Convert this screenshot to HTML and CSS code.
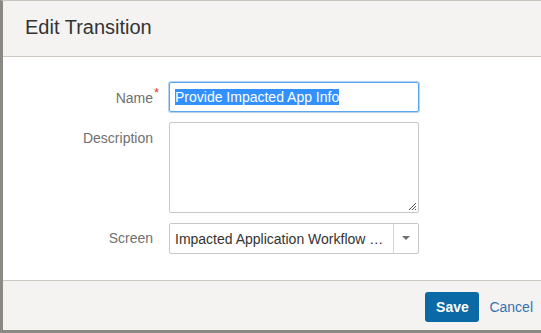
FILE: index.html
```html
<!DOCTYPE html>
<html lang="en">
<head>
    <meta charset="UTF-8">
    <meta name="viewport" content="width=device-width, initial-scale=1.0">
    <title>Edit Transition</title>
    <link rel="stylesheet" href="styles.css">
</head>
<body>

    <div class="dialog">
        <div class="dialog-header">
            <h2>Edit Transition</h2>
        </div>

        <div class="dialog-body">
            <div class="field">
                <label class="label"><span class="name-text">Name<span class="required">*</span></span></label>
                <div class="input focused"><span class="selected">Provide Impacted App Info</span></div>
            </div>

            <div class="field">
                <label class="label">Description</label>
                <div class="textarea">
                    <svg class="grip" width="9" height="9" viewBox="0 0 9 9">
                        <path d="M8 1L1 8M8 4L4 8M8 7L7 8" stroke="#555" stroke-width="1"/>
                    </svg>
                </div>
            </div>

            <div class="field screen-field">
                <label class="label">Screen</label>
                <div class="select">
                    <span class="select-text">Impacted Application Workflow …</span>
                    <span class="select-arrow"></span>
                </div>
            </div>
        </div>

        <div class="dialog-footer">
            <button class="btn-save">Save</button>
            <a class="cancel" href="#">Cancel</a>
        </div>
    </div>

</body>
</html>
```

FILE: styles.css
```css
* {
    box-sizing: border-box;
    margin: 0;
    padding: 0;
    font-family: "Liberation Sans", Arial, sans-serif;
}

body {
    background: #ffffff;
    width: 541px;
    height: 333px;
    overflow: hidden;
}

.dialog {
    height: 333px;
    border-left: 3px solid #8b8984;
    border-top: 1px solid #c8c5bf;
    border-bottom: 3px solid #8b8984;
    display: flex;
    flex-direction: column;
}

.dialog-header {
    height: 56px;
    background: #f4f3f2;
    border-bottom: 1px solid #cdc9c2;
    display: flex;
    align-items: center;
    padding-left: 22px;
}

.dialog-header h2 {
    font-size: 20px;
    font-weight: normal;
    color: #333333;
    margin-top: -2px;
}

.dialog-body {
    flex: 1;
    background: #ffffff;
    padding-top: 25px;
}

.field {
    display: flex;
    align-items: flex-start;
    margin-bottom: 10px;
}

.label {
    width: 150px;
    text-align: right;
    font-size: 14px;
    color: #707070;
    padding-top: 8px;
    flex-shrink: 0;
}

.name-text {
    position: relative;
}

.required {
    color: #d04437;
    position: absolute;
    left: 100%;
    top: -5px;
    margin-left: 1px;
    font-size: 13px;
}

.input {
    margin-left: 16px;
    width: 250px;
    height: 30px;
    border: 1px solid #c8c8c8;
    border-radius: 2px;
    padding: 6px 5px;
    font-size: 14px;
    color: #333;
}

.input.focused {
    border-color: #59a6ec;
    box-shadow: 0 0 0 1px #b3d4f5;
}

.selected {
    background: #3390ff;
    color: #ffffff;
    line-height: 16px;
    display: inline-block;
}

.textarea {
    margin-left: 16px;
    width: 250px;
    height: 91px;
    border: 1px solid #c8c8c8;
    border-radius: 2px;
    position: relative;
}

.grip {
    position: absolute;
    right: 1px;
    bottom: 1px;
}

.screen-field {
    margin-top: 5px;
}

.screen-field .label {
    padding-top: 7px;
}

.select {
    margin-left: 16px;
    width: 250px;
    height: 31px;
    border: 1px solid #c8c8c8;
    border-radius: 2px;
    display: flex;
    align-items: center;
    font-size: 14px;
    color: #333333;
}

.select-text {
    flex: 1;
    padding-left: 5px;
    white-space: nowrap;
    overflow: hidden;
}

.select-arrow {
    width: 25px;
    height: 100%;
    border-left: 1px solid #d5d5d5;
    position: relative;
}

.select-arrow::after {
    content: "";
    position: absolute;
    left: 8px;
    top: 12px;
    border-left: 4px solid transparent;
    border-right: 4px solid transparent;
    border-top: 4px solid #707070;
}

.dialog-footer {
    height: 50px;
    background: #f4f3f2;
    border-top: 1px solid #cdc9c2;
    display: flex;
    align-items: center;
    justify-content: flex-end;
    padding-right: 8px;
}

.btn-save {
    background: #0b6aa5;
    color: #ffffff;
    border: none;
    border-radius: 3px;
    font-size: 14px;
    font-weight: bold;
    width: 54px;
    height: 30px;
    margin-top: 2px;
}

.cancel {
    color: #3572b0;
    text-decoration: none;
    font-size: 14px;
    margin-left: 10px;
    margin-top: 2px;
}
```
